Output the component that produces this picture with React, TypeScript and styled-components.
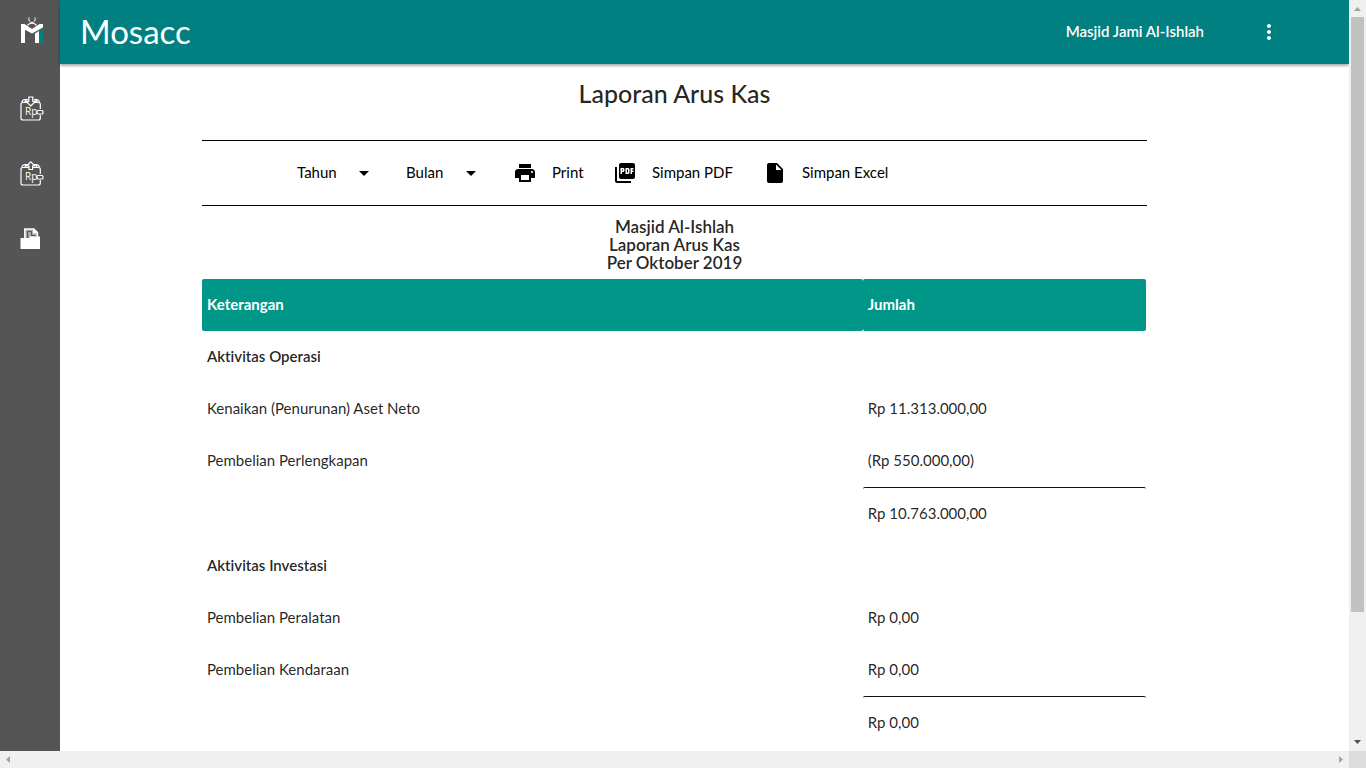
import React from 'react';
import styled, { createGlobalStyle, css } from 'styled-components';
import { MdArrowDropDown, MdInsertDriveFile, MdMoreVert, MdPictureAsPdf, MdPrint } from 'react-icons/md';

const GlobalStyle = createGlobalStyle`
  *, *::before, *::after { box-sizing: border-box; }
  body {
    margin: 0;
    background: #fff;
    color: rgba(0, 0, 0, 0.87);
    font-family: Lato, "Open Sans", sans-serif;
    font-size: 15px;
    line-height: 22px;
    font-variant-ligatures: none;
  }
  button, select { font: inherit; color: inherit; }
`;

const Viewport = styled.div`
  display: grid;
  grid-template-columns: minmax(0, 1fr) 17px;
  grid-template-rows: minmax(0, 1fr) 17px;
  height: 100vh;
`;

const Page = styled.div`
  display: grid;
  grid-template-columns: 60px minmax(0, 1fr);
  overflow: hidden;
`;

const Sidebar = styled.nav`
  display: flex;
  flex-direction: column;
  align-items: center;
  background: #555;
`;

const SideLink = styled.a<{ $brand?: boolean }>`
  display: flex;
  align-items: center;
  justify-content: center;
  width: 60px;
  height: ${p => (p.$brand ? 76 : 65)}px;
  padding: ${p => (p.$brand ? '0 0 16px 4px' : '0 0 0 4px')};
`;

const Content = styled.div`
  min-width: 0;
`;

const Header = styled.header`
  display: flex;
  align-items: center;
  height: 64px;
  padding: 0 68px 0 20px;
  background: #008080;
  color: #fff;
  box-shadow: 0 2px 2px rgba(0, 0, 0, 0.2), 0 1px 4px rgba(0, 0, 0, 0.2);
`;

const Brand = styled.a`
  flex: 1;
  color: #fff;
  font-size: 33px;
  line-height: 62px;
  padding-bottom: 2px;
  text-decoration: none;
`;

const Account = styled.span`
  padding-bottom: 2px;
  font-weight: 600;
`;

const MenuButton = styled.button`
  display: flex;
  margin-left: 53px;
  padding: 0;
  border: 0;
  background: none;
  font-size: 24px;
`;

const Main = styled.main`
  padding: 14px 202px 0 142px;
`;

const Title = styled.h1`
  margin: 0 0 32px;
  font-size: 25px;
  line-height: 30px;
  font-weight: 500;
  text-align: center;
`;

const Toolbar = styled.div`
  display: grid;
  grid-template-columns: 109px 107px 100px 150px 160px;
  align-items: center;
  height: 66px;
  padding-left: 80px;
  border: solid #000;
  border-width: 1px 0;
  color: #000;
`;

const Picker = styled.label`
  display: grid;
  align-items: center;
  padding: 0 15px;

  select, svg { grid-area: 1 / 1; }
  svg { justify-self: end; pointer-events: none; font-size: 24px; }
`;

const Select = styled.select`
  appearance: none;
  width: 100%;
  padding: 0 0 2px;
  border: 0;
  background: none;
`;

const Action = styled.button`
  display: flex;
  align-items: center;
  gap: 15px;
  padding: 0 15px;
  border: 0;
  background: none;
  white-space: nowrap;

  svg { flex: none; font-size: 24px; }
  span { padding-bottom: 2px; }
`;

const ReportHeading = styled.h2`
  margin: 12px 0 7px;
  font-size: 17px;
  line-height: 18px;
  font-weight: 600;
  text-align: center;
`;

const Report = styled.table`
  width: calc(100% - 1px);
  table-layout: fixed;
  border-collapse: separate;
  border-spacing: 0;
`;

const cell = css`
  padding: 14px 5px 16px;
  border-radius: 2px;
  text-align: left;
`;

const HeadCell = styled.th<{ $wide?: boolean }>`
  ${cell}
  width: ${p => (p.$wide ? '70%' : '30%')};
  background: #009688;
  color: #fff;
  font-weight: 700;
`;

const Cell = styled.td<{ $strong?: boolean; $total?: boolean }>`
  ${cell}
  height: 52px;
  font-weight: ${p => (p.$strong ? 600 : 400)};
  ${p => p.$total && css`
    height: 53px;
    border-top: 1px solid #111;
  `}
`;

const Track = styled.div<{ $horizontal?: boolean }>`
  display: flex;
  flex-direction: ${p => (p.$horizontal ? 'row' : 'column')};
  align-items: center;
  justify-content: space-between;
  background: #f0f0f0;
`;

const Thumb = styled.div`
  flex: 0 1 595px;
  width: 13px;
  margin-bottom: auto;
  background: #c1c1c1;
`;

const ArrowBox = styled.svg`
  flex: none;
  width: 17px;
  height: 17px;
`;

const Corner = styled.div`
  background: #dcdcdc;
`;

const arrows = {
  up: 'M5 11h7L8.500 7z',
  down: 'M5 6h7L8.500 10z',
  left: 'M10 5v7L6 8.500z',
  right: 'M7 5v7L11 8.500z',
};

const Arrow = ({ to, dark }: { to: keyof typeof arrows; dark?: boolean }) => (
  <ArrowBox viewBox="0 0 17 17" aria-hidden="true">
    <path d={arrows[to]} fill={dark ? '#505050' : '#a3a3a3'} />
  </ArrowBox>
);

const Logo = () => (
  <svg width="24" height="28" viewBox="0 0 24 28" aria-hidden="true">
    <path d="M9 1.500c-.8 2.800.8 5 3 5s3.800-2.200 3-5" fill="none" stroke="#fff" strokeWidth="1" />
    <path d="M7.500 9.300c2-3 7-3 9 0" fill="none" stroke="#fff" strokeWidth="1.300" />
    <path d="M1 8h3.500L12 13 19.500 8H23v3.500L12 17.500l-7-3.800V27H1z" fill="#fff" />
    <path d="M15 17.500l4-2.500V27h-4z" fill="#fff" />
    <path d="M19 15l4-2.500V27h-4z" fill="#008080" />
  </svg>
);

const WalletIcon = ({ outgoing }: { outgoing?: boolean }) => (
  <svg width="24" height="26" viewBox="0 0 24 26" fill="none" stroke="#fff" strokeWidth="1.200" aria-hidden="true">
    <path d="M20.300 13V8.500q0-2-2-2H3q-2 0-2 2v13.500q0 2 2 2h15.300q2 0 2-2V19" />
    <path d="M1.800 6.500Q2.300 3.500 5 3.500h2.500M19.500 6.500Q19 3.500 16.500 3.500H14M5 6.500c0-2 1-3 3-2.500M17 6.500c0-2-1-3-3-2.500" />
    <path
      d={outgoing ? 'M9 8.500V5H6.800L10.800.8 14.800 5H12.600v3.500z' : 'M8.800 1h4v4.500h2.600l-4.600 4.500L6.200 5.500h2.600z'}
      fill="#555"
    />
    <rect x="17" y="14.500" width="6" height="3.500" rx="1" fill="#555" />
    <text x="5" y="19" fill="#fff" stroke="none" fontFamily="Open Sans, sans-serif" fontSize="10">Rp</text>
  </svg>
);

const FolderIcon = () => (
  <svg width="24" height="24" viewBox="0 0 24 24" aria-hidden="true">
    <path d="M4.800 12V2h9l3.700 3.500V12" fill="#aaa" stroke="#fff" strokeWidth="1.500" />
    <path d="M7.500 4.500h4v4h3.500v2h-7.500z" fill="none" stroke="#555" strokeWidth="1" />
    <path d="M13 1.500L18 6.500h-5z" fill="#fff" />
    <path d="M.5 11h8l1.500-1.500h10V22H.5z" fill="#fff" />
  </svg>
);

type Row = { label?: string; amount?: string; strong?: boolean; total?: boolean };

const rows: Row[] = [
  { label: 'Aktivitas Operasi', strong: true },
  { label: 'Kenaikan (Penurunan) Aset Neto', amount: 'Rp 11.313.000,00' },
  { label: 'Pembelian Perlengkapan', amount: '(Rp 550.000,00)' },
  { amount: 'Rp 10.763.000,00', total: true },
  { label: 'Aktivitas Investasi', strong: true },
  { label: 'Pembelian Peralatan', amount: 'Rp 0,00' },
  { label: 'Pembelian Kendaraan', amount: 'Rp 0,00' },
  { amount: 'Rp 0,00', total: true },
];

export default function App() {
  return (
    <Viewport>
      <GlobalStyle />
      <Page>
        <Sidebar>
          <SideLink href="#" $brand aria-label="Mosacc"><Logo /></SideLink>
          <SideLink href="#" aria-label="Penerimaan"><WalletIcon /></SideLink>
          <SideLink href="#" aria-label="Pengeluaran"><WalletIcon outgoing /></SideLink>
          <SideLink href="#" aria-label="Laporan"><FolderIcon /></SideLink>
        </Sidebar>
        <Content>
          <Header>
            <Brand href="#">Mosacc</Brand>
            <Account>Masjid Jami Al-Ishlah</Account>
            <MenuButton aria-label="Menu"><MdMoreVert /></MenuButton>
          </Header>
          <Main>
            <Title>Laporan Arus Kas</Title>
            <Toolbar>
              <Picker>
                <Select aria-label="Tahun"><option>Tahun</option></Select>
                <MdArrowDropDown />
              </Picker>
              <Picker>
                <Select aria-label="Bulan"><option>Bulan</option></Select>
                <MdArrowDropDown />
              </Picker>
              <Action><MdPrint /><span>Print</span></Action>
              <Action><MdPictureAsPdf /><span>Simpan PDF</span></Action>
              <Action><MdInsertDriveFile /><span>Simpan Excel</span></Action>
            </Toolbar>
            <ReportHeading>
              Masjid Al-Ishlah<br />
              Laporan Arus Kas<br />
              Per Oktober 2019
            </ReportHeading>
            <Report>
              <thead>
                <tr>
                  <HeadCell $wide>Keterangan</HeadCell>
                  <HeadCell>Jumlah</HeadCell>
                </tr>
              </thead>
              <tbody>
                {rows.map((row, i) => (
                  <tr key={i}>
                    <Cell $strong={row.strong}>{row.label}</Cell>
                    <Cell $total={row.total}>{row.amount}</Cell>
                  </tr>
                ))}
              </tbody>
            </Report>
          </Main>
        </Content>
      </Page>
      <Track>
        <Arrow to="up" />
        <Thumb />
        <Arrow to="down" dark />
      </Track>
      <Track $horizontal>
        <Arrow to="left" />
        <Arrow to="right" />
      </Track>
      <Corner />
    </Viewport>
  );
}
